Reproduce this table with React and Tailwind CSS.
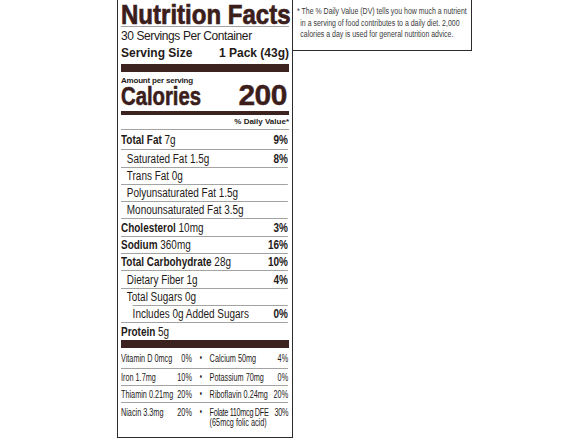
const sans = '[font-family:Liberation_Sans,Arial,sans-serif]';

const nutrients = [
  { name: 'Total Fat', amt: '7g', dv: '9%', pad: '', h: 'h-[20px]' },
  { name: 'Saturated Fat 1.5g', dv: '8%', pad: 'pl-[7px]', h: 'h-[18px]' },
  { name: 'Trans Fat 0g', pad: 'pl-[7px]', h: 'h-[17px]' },
  { name: 'Polyunsaturated Fat 1.5g', pad: 'pl-[7px]', h: 'h-[17px]' },
  { name: 'Monounsaturated Fat 3.5g', pad: 'pl-[7px]', h: 'h-[17px]' },
  { name: 'Cholesterol', amt: '10mg', dv: '3%', pad: '', h: 'h-[18px]' },
  { name: 'Sodium', amt: '360mg', dv: '16%', pad: '', h: 'h-[17px]' },
  { name: 'Total Carbohydrate', amt: '28g', dv: '10%', pad: '', h: 'h-[17px]' },
  { name: 'Dietary Fiber 1g', dv: '4%', pad: 'pl-[7px]', h: 'h-[18px]' },
  { name: 'Total Sugars 0g', pad: 'pl-[7px]', h: 'h-[17px]', line: 'ml-[14px]' },
  { name: 'Includes 0g Added Sugars', dv: '0%', pad: 'pl-[14px]', h: 'h-[17px]' },
];

const vitamins = [
  ['Vitamin D 0mcg', '0%', 'Calcium 50mg', '4%', 'h-[21px]'],
  ['Iron 1.7mg', '10%', 'Potassium 70mg', '0%', 'h-[17px]'],
  ['Thiamin 0.21mg', '20%', 'Riboflavin 0.24mg', '20%', 'h-[17px]'],
];

function NutrientRow({ n }) {
  // bold names carry an amount, sub rows are plain
  return (
    <div className={`flex flex-col ${n.h}`}>
      <div className={`flex flex-1 items-center justify-between ${n.pad} text-[12px] leading-[14px]`}>
        <span>
          {n.amt ? (
            <>
              <span className="font-bold">{n.name}</span> {n.amt}
            </>
          ) : (
            n.name
          )}
        </span>
        {n.dv && <span className="font-bold">{n.dv}</span>}
      </div>
      <div className={`h-px bg-[#a3a3a3] ${n.line || ''}`} />
    </div>
  );
}

export default function App() {
  return (
    <div className={`flex h-[441px] w-[588px] items-start overflow-hidden bg-white pl-[117px] text-[#241a18] ${sans}`}>
      {/* ================= LABEL ================= */}
      <div className="h-[438px] w-[176px] overflow-hidden border-x border-b border-[#2b2b2b] px-[3px]">
        <div className="h-[27px] whitespace-nowrap border-b border-[#a3a3a3] text-[27px] font-bold leading-[30px] text-[#3b1e1b]">
          <span className="inline-block origin-left scale-x-[0.89] [-webkit-text-stroke:0.7px_#3b1e1b]">Nutrition Facts</span>
        </div>
        <div className="h-[18px] text-[12px] leading-[18px] tracking-[-0.4px]">30 Servings Per Container</div>
        <div className="flex h-[17px] justify-between text-[12px] font-bold leading-[17px]">
          <span>Serving Size</span>
          <span>1 Pack (43g)</span>
        </div>
        <div className="mt-[2px] h-[8px] bg-[#3d2320]" />

        <div className="h-[39px] pt-[4px]">
          <div className="text-[8px] font-bold leading-[10px] tracking-[-0.2px]">Amount per serving</div>
          <div className="flex h-[18px] items-baseline justify-between leading-[18px] text-[#3b1e1b]">
            <span className="inline-block origin-left scale-x-[0.78] text-[26px] font-bold [-webkit-text-stroke:0.6px_#3b1e1b]">
              Calories
            </span>
            <span className="pr-[2px] text-[30px] font-bold tracking-[-0.5px] [-webkit-text-stroke:0.4px_#3b1e1b]">200</span>
          </div>
        </div>
        <div className="h-[4px] bg-[#3d2320]" />

        <div className="flex h-[15px] items-center justify-end border-b border-[#a3a3a3] text-[8px] font-bold leading-[10px]">
          % Daily Value*
        </div>

        {/* condensed type: rows are laid out wide and squeezed */}
        <div className="w-[201px] origin-left scale-x-[0.83] whitespace-nowrap">
          {nutrients.map((n) => (
            <NutrientRow key={n.name} n={n} />
          ))}
          <div className="flex h-[17px] items-center text-[12px] leading-[14px]">
            <span>
              <span className="font-bold">Protein</span> 5g
            </span>
          </div>
        </div>
        <div className="h-[8px] bg-[#3d2320]" />

        {/* ================= VITAMINS ================= */}
        <div className="w-[264px] origin-left scale-x-[0.633] whitespace-nowrap text-[11.5px] leading-[10px]">
          {vitamins.map((v) => (
            <div key={v[0]} className={`flex border-b border-[#a3a3a3] ${v[4]}`}>
              <div className="flex w-[112px] items-center justify-between">
                <span>{v[0]}</span>
                <span>{v[1]}</span>
              </div>
              <div className="flex w-[28px] items-center justify-center text-[10px]">•</div>
              <div className="flex flex-1 items-center justify-between">
                <span>{v[2]}</span>
                <span>{v[3]}</span>
              </div>
            </div>
          ))}
          <div className="flex pt-[4px]">
            <div className="flex w-[112px] justify-between">
              <span>Niacin 3.3mg</span>
              <span>20%</span>
            </div>
            <div className="flex w-[28px] justify-center text-[10px]">•</div>
            <div className="flex-1">
              <div className="flex justify-between tracking-[-0.5px]">
                <span>Folate 110mcg DFE</span>
                <span>30%</span>
              </div>
              <div>(65mcg folic acid)</div>
            </div>
          </div>
        </div>
      </div>

      {/* ================= NOTE ================= */}
      <div className="h-[51px] w-[179px] overflow-hidden border-r border-b border-[#2b2b2b] pl-[4px] pt-[6px]">
        <div className="w-[212px] origin-left scale-x-[0.82] whitespace-nowrap pl-[4px] -indent-[4px] text-[8.5px] leading-[11.7px] text-[#3a3a3a]">
          * The % Daily Value (DV) tells you how much a nutrient
          <br />
          in a serving of food contributes to a daily diet. 2,000
          <br />
          calories a day is used for general nutrition advice.
        </div>
      </div>
    </div>
  );
}
